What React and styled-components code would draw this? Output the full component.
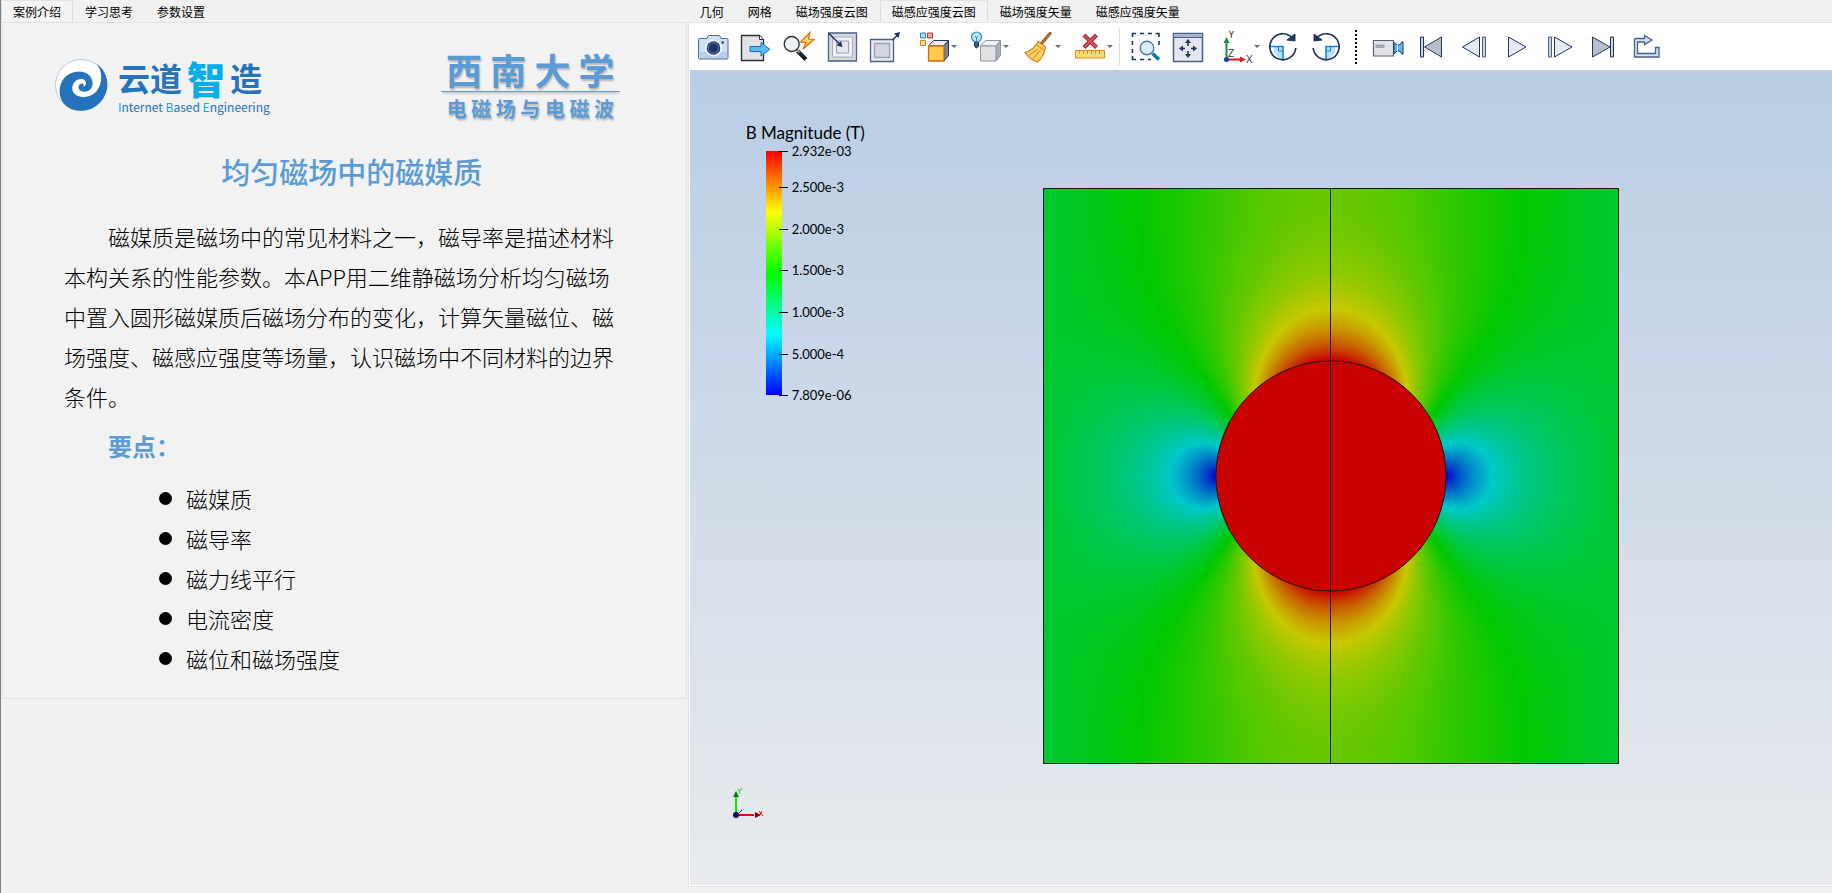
import React, { useEffect, useRef } from "react";
import styled, { createGlobalStyle } from "styled-components";

const GlobalStyle = createGlobalStyle`
  * { box-sizing: border-box; }
  body {
    margin: 0;
    background: #f1f1f1;
    color: #000;
    font-family: "Noto Sans CJK SC", sans-serif;
    font-size: 12px;
  }
  h1, h2, p, ul, ol { margin: 0; padding: 0; font-weight: inherit; }
  ul, ol { list-style: none; }
`;

const Workspace = styled.div`
  display: grid;
  grid-template-columns: minmax(0, 3fr) minmax(0, 5fr);
  min-height: 100vh;
  padding-bottom: 6px;
  border-left: 1px solid #7d7c8b;
`;

const Pane = styled.section`
  display: flex;
  flex-direction: column;
  min-width: 0;
`;

const TabList = styled.nav`
  display: flex;
  height: 22px;
`;

const Tab = styled.button`
  height: 23px;
  padding: 0 11px;
  border: 1px solid ${(p) => (p.$active ? "#dcdcdc" : "transparent")};
  border-top-color: ${(p) => (p.$active ? "#e4e4e4" : "transparent")};
  border-bottom-color: #dcdcdc;
  background: ${(p) => (p.$active ? "#f3f3f3" : "transparent")};
  font: inherit;
  line-height: 20px;
  color: #000;
  white-space: nowrap;
`;

const Sheet = styled.div`
  flex: 0 0 auto;
  margin: 0 1px;
  padding: 24px 66px 20px 61px;
  border: 1px solid #e2e2e2;
  background: #f2f2f2;
`;

const Brands = styled.header`
  display: flex;
  justify-content: space-between;
  height: 88px;
`;

const Company = styled.div`
  display: flex;
  align-items: center;
  gap: 10px;
  height: 76px;
  margin-left: -9px;
`;

const CompanyText = styled.div`
  display: flex;
  flex-direction: column;
  color: #2673bc;
`;

const CompanyName = styled.strong`
  display: flex;
  align-items: center;
  gap: 5px;
  height: 44px;
  font-size: 32px;
  font-weight: 700;
  white-space: nowrap;
`;

const BrushGlyph = styled.span`
  font-size: 38px;
  font-weight: 900;
  color: #00aef0;
`;

const Tagline = styled.span`
  font-size: 12px;
  line-height: 16px;
  white-space: nowrap;

  b { font-weight: 400; color: #00aef0; }
`;

const School = styled.div`
  color: #5b9bd5;
  font-weight: 700;
  text-align: center;
  white-space: nowrap;
  text-shadow: 1px 2px 2px rgba(0, 0, 0, 0.25);
`;

const SchoolName = styled.div`
  padding: 0 5px;
  border-bottom: 1px solid #5b9bd5;
  box-shadow: 0 4px 2px -2px rgba(0, 0, 0, 0.15);
  font-size: 36px;
  line-height: 44px;
`;

const Course = styled.div`
  font-size: 20px;
  line-height: 34px;
`;

const Title = styled.h1`
  padding: 16px 0 25px 20px;
  color: #5b9bd5;
  font-size: 29px;
  font-weight: 500;
  line-height: 40px;
  text-align: center;
`;

const Intro = styled.p`
  font-size: 22px;
  font-weight: 300;
  line-height: 40px;
  text-indent: 2em;
`;

const KeyHeading = styled.h2`
  padding: 10px 0 12px 44px;
  color: #5b9bd5;
  font-size: 24px;
  font-weight: 700;
  line-height: 40px;
`;

const KeyList = styled.ul`
  padding-left: 95px;
`;

const KeyItem = styled.li`
  display: flex;
  align-items: center;
  gap: 14px;
  font-size: 22px;
  font-weight: 300;
  line-height: 40px;

  &::before {
    content: "";
    width: 13px;
    height: 13px;
    border-radius: 50%;
    background: #000;
  }
`;

const Viewer = styled.div`
  display: flex;
  flex-direction: column;
  flex: 1;
  border: 1px solid #e2e2e2;
  border-right: 0;
  background: #fff;
`;

const Toolbar = styled.div`
  display: flex;
  align-items: center;
  height: 47px;
  padding-left: 3px;
`;

const Tool = styled.button`
  display: flex;
  align-items: center;
  justify-content: ${(p) => (p.$menu ? "flex-end" : "center")};
  gap: 1px;
  flex: none;
  width: ${(p) => (p.$menu ? 52 : 43)}px;
  height: 40px;
  padding: 0;
  border: 0;
  background: none;
`;

const Caret = styled.span`
  width: 6px;
  border: 3px solid transparent;
  border-top-color: #6e6e6e;
  border-bottom: 0;
  margin-right: 2px;
`;

const Divider = styled.span`
  width: 9px;
  height: 36px;
  flex: none;
  padding-left: 4px;

  &::before {
    content: "";
    display: block;
    width: 1px;
    height: 100%;
    background: #dadada;
  }
`;

const DottedDivider = styled.span`
  width: 19px;
  height: 34px;
  flex: none;
  padding-left: 7px;

  &::before {
    content: "";
    display: block;
    width: 2px;
    height: 100%;
    background: repeating-linear-gradient(#000 0 2px, transparent 2px 4px);
  }
`;

const Scene = styled.div`
  display: flex;
  flex: 1;
  margin: 0 0 1px 1px;
  background: linear-gradient(#b9cde5, #e8eaed);
`;

const SceneSide = styled.div`
  display: flex;
  flex-direction: column;
  justify-content: space-between;
  flex: 0 1 353px;
  padding: 52px 0 62px 38px;
`;

const PlotArea = styled.div`
  display: flex;
  align-items: center;
  flex: 1;
  min-width: 0;
  padding-bottom: 4px;
`;

const Field = styled.canvas`
  display: block;
  width: 100%;
  max-width: 576px;
  aspect-ratio: 1;
`;

const Legend = styled.div`
  padding-left: 18px;
  font-family: Lato, sans-serif;
`;

const LegendTitle = styled.div`
  font-size: 17px;
  line-height: 22px;
  white-space: nowrap;
`;

const Scale = styled.div`
  display: flex;
  height: 258px;
  padding-left: 20px;
`;

const ColorBar = styled.div`
  width: 16px;
  margin: 7px 0;
  background: linear-gradient(#f00, #ff0 25%, #0f0 50%, #0ff 75%, #00f);
`;

const Ticks = styled.ol`
  display: flex;
  flex-direction: column;
  margin-left: -3px;
`;

const Tick = styled.li`
  display: flex;
  gap: 4px;
  min-height: 0;
  font-size: 13px;
  line-height: 14px;
  white-space: nowrap;

  &::before {
    content: "";
    width: 9px;
    height: 1px;
    margin-top: 7px;
    background: #000;
  }
`;

const C = { navy: "#1d3461", edge: "#4a5f86", face: "#e4e7ee", blue: "#8fd0f5" };

const Svg = ({ children }) => (
  <svg width="32" height="32" viewBox="0 0 32 32" fill="none" aria-hidden="true">{children}</svg>
);

const Rotate = ({ mirrored }) => (
  <Svg>
    <g transform={mirrored ? "translate(32 0) scale(-1 1)" : undefined}>
      <path d="M16 16H7v5q3 6 9 8z" fill="#b5e2fa" />
      <path d="M3 15.500H16V29" stroke="#1684cc" strokeWidth="1.600" />
      <path d="M11.500 16v4H16" stroke="#1684cc" />
      <path d="M25 6.500A13 13 0 1 0 28.800 17" stroke={C.navy} strokeWidth="1.700" />
      <path d="M28 3v7l-8-1z" fill={C.navy} stroke={C.navy} />
    </g>
  </Svg>
);

const icons = {
  camera: (
    <Svg>
      <path d="M3 7.500h7l1.500-3h11l1.500 3h6q1 0 1 1v18q0 1.500-1 1.500H3q-1.500 0-1.500-1.500V9q0-1.500 1.500-1.500z" fill="#cfe0f5" stroke="#4c6791" />
      <path d="M3 21h27v6H3z" fill="#b6cdeb" />
      <circle cx="16.500" cy="17" r="8.500" fill="#f4f8fd" />
      <circle cx="16.500" cy="17" r="6.800" fill={C.navy} />
      <circle cx="16.500" cy="17" r="5.200" stroke="#5f7fb5" />
      <circle cx="25.700" cy="11.500" r="1.200" fill={C.navy} />
    </Svg>
  ),
  exporter: (
    <Svg>
      <path d="M1.500 4.500h18l4 4v21h-22z" fill="#dfe2e9" stroke="#2a2c33" strokeWidth="1.300" />
      <path d="M19.500 4.500v4h4" fill="#fff" stroke="#2a2c33" />
      <path d="M10 15.500h11v-4l9 6.800-9 6.700v-4.500H10z" fill="#55bdf2" stroke="#1b6fb5" />
    </Svg>
  ),
  flash: (
    <Svg>
      <path d="M14.500 20l8.500 8.500" stroke="#222" strokeWidth="4" />
      <path d="M13.500 18.500l3 3" stroke="#999" strokeWidth="2" />
      <circle cx="8.700" cy="13" r="7.500" fill="#edf0f4" stroke="#333" strokeWidth="1.400" />
      <path d="M27 1.500L17.500 11l5.500.5-3 6.500L31 8.500 25.500 8z" fill="#ffd65a" stroke="#dd6b0d" strokeWidth="1.200" />
    </Svg>
  ),
  zoomIn: (
    <Svg>
      <path d="M2.500 2h28v28h-28z" fill="#d5d9e2" stroke={C.edge} strokeWidth="1.300" />
      <path d="M6.500 6h20v20h-20z" fill="#eef0f4" stroke="#a5adbf" />
      <path d="M10.500 10h12v12h-12z" fill={C.face} stroke="#9aa3b5" />
      <path d="M2.500 2L14 13.500" stroke={C.navy} strokeWidth="1.400" />
      <path d="M16.500 16l-6-1.500 4.500-4.500z" fill={C.navy} />
    </Svg>
  ),
  zoomOut: (
    <Svg>
      <path d="M1.500 8.500h23v22h-23z" fill="#e9ecf1" stroke={C.edge} strokeWidth="1.300" />
      <path d="M5.500 12.500h15v14h-15z" fill="#d4d7df" stroke="#98a1b3" strokeWidth="1.300" />
      <path d="M23.500 9L29 3.500" stroke={C.navy} strokeWidth="1.400" />
      <path d="M31 1l-6 1.500 4.500 4.500z" fill={C.navy} />
    </Svg>
  ),
  cube: (
    <Svg>
      <path d="M2.500 2h5v5h-5z" fill="#a8ddf5" stroke="#2a87bd" />
      <path d="M9.500 2h5v5h-5z" fill="#eea9a9" stroke="#b92f36" />
      <path d="M2.500 9.500h5v5h-5z" fill="#ffe39b" stroke="#df811a" />
      <path d="M10.500 15l5-5.500h15l-4.500 5.500z" fill="#eceef2" stroke={C.navy} />
      <path d="M26 15l4.500-5.500v15L26 30z" fill="#7886a0" stroke={C.navy} />
      <path d="M10.500 15h15.500v15h-15.500z" fill="#fdca4b" stroke="#c96a13" strokeWidth="1.300" />
    </Svg>
  ),
  bulb: (
    <Svg>
      <path d="M10.500 15l5-5.500h15l-4.500 5.500z" fill="#f1f2f4" stroke="#8b93a0" />
      <path d="M26 15l4.500-5.500v15L26 30z" fill="#aab0ba" stroke="#8b93a0" />
      <path d="M10.500 15h15.500v15h-15.500z" fill="#dfe1e5" stroke="#8b93a0" />
      <path d="M4.500 11.500h4v4l-2 1.500-2-1.500z" fill="#4a5a78" stroke={C.navy} />
      <circle cx="6.500" cy="6" r="5" fill="#bfe5fa" stroke="#2f86c6" strokeWidth="1.200" />
      <path d="M5 5l1.500 2L8 5M6.500 7v4" stroke="#2f86c6" />
    </Svg>
  ),
  broom: (
    <Svg>
      <path d="M28 2.500l-8.500 10" stroke="#8b4a14" strokeWidth="3" strokeLinecap="round" />
      <path d="M28 2.500l-8.500 10" stroke="#c9772c" strokeWidth="1.200" />
      <path d="M16 10.500l7.500 5.500q-1 9-8 15Q8 29 3 21.500 12 19 16 10.500z" fill="#fbd263" stroke="#cf8119" strokeWidth="1.200" />
      <path d="M14 13.500l8.500 6M16 18L7 24.500M18 19.500l-7 8.500" stroke="#cf8119" />
    </Svg>
  ),
  ruler: (
    <Svg>
      <path d="M10 4l12.500 12.500M22.500 4L10 16.500" stroke="#9e2630" strokeWidth="4" />
      <path d="M10.500 4.500L22 16M22 4.500L10.500 16" stroke="#d9565f" strokeWidth="2" />
      <path d="M1.500 19.500h29v7.500h-29z" fill="#ffdb74" stroke="#df8721" />
      <path d="M5.500 20v3M9.500 20v3M13.500 20v3M17.500 20v3M21.500 20v3M25.500 20v3" stroke="#df8721" />
    </Svg>
  ),
  select: (
    <Svg>
      <path d="M3.500 6V2.500H7M11 2.500h4M19 2.500h4M26.500 2.500H30V6M30 10v4M3.500 10v4M3.500 18v4M3.500 25v3.500H7M11 28.500h4M19 28.500h3" stroke={C.navy} strokeWidth="1.600" />
      <path d="M23.500 22.500l6.500 6" stroke="#1c6fae" strokeWidth="3.600" />
      <circle cx="18" cy="17" r="6.800" fill="#d8effb" stroke="#4e7ba8" strokeWidth="1.400" />
    </Svg>
  ),
  pan: (
    <Svg>
      <path d="M1.500 2.500h29v28h-29z" fill={C.face} stroke={C.edge} strokeWidth="1.500" />
      <path d="M2 3h28v3H2z" fill="#a9b4ca" />
      <path d="M2 6.500h28" stroke={C.edge} />
      <path d="M16 10v5M16 20v5M8 17.500h5M19 17.500h5" stroke={C.navy} strokeWidth="1.600" />
      <path d="M16 8l3 4h-6zM16 27l3-4h-6zM7 17.500l4-3v6zM25 17.500l-4-3v6z" fill={C.navy} />
    </Svg>
  ),
  axes: (
    <Svg>
      <path d="M5.500 28V8" stroke="#179146" strokeWidth="2" />
      <path d="M5.500 6l3 6h-6z" fill="#179146" />
      <path d="M6 28.500h15" stroke="#e8131c" strokeWidth="2" />
      <path d="M25 28.500l-6 3v-6z" fill="#e8131c" />
      <circle cx="5.500" cy="28.500" r="2.500" fill="#1b3aa0" />
      <g fill="#333" fontFamily="Liberation Sans, sans-serif" fontSize="10">
        <text x="7" y="7">Y</text>
        <text x="7" y="26">Z</text>
        <text x="25" y="32">X</text>
      </g>
    </Svg>
  ),
  cw: <Rotate />,
  ccw: <Rotate mirrored />,
  video: (
    <Svg>
      <path d="M1.500 9.500h20v15.500h-20z" fill="#e3e4e9" stroke="#5c6170" strokeWidth="1.200" />
      <path d="M3.500 13.500h9v3.500h-9z" fill="#a5a7ad" />
      <path d="M22 11.500l3 2.500h2l4-3.500v13L27 20h-2l-3 3z" fill="#54bdee" stroke={C.navy} />
      <path d="M25.500 13.500v7" stroke="#fff" />
    </Svg>
  ),
  first: (
    <Svg>
      <path d="M5.500 6h3v20h-3z" fill="#cdd3df" stroke={C.navy} />
      <path d="M9.500 16L26.500 6v20z" fill="#b8bfcb" stroke={C.navy} />
    </Svg>
  ),
  previous: (
    <Svg>
      <path d="M4.500 16L21.500 6v20z" fill="#e6eaf2" stroke={C.navy} />
      <path d="M24.500 6h3v20h-3z" fill="#cdd3df" stroke={C.edge} />
    </Svg>
  ),
  play: (
    <Svg>
      <path d="M7.500 6L25 16 7.500 26z" fill="#e6eaf2" stroke={C.navy} />
    </Svg>
  ),
  next: (
    <Svg>
      <path d="M4.500 6h3v20h-3z" fill="#cdd3df" stroke={C.edge} />
      <path d="M10.500 6L28 16 10.500 26z" fill="#e6eaf2" stroke={C.navy} />
    </Svg>
  ),
  last: (
    <Svg>
      <path d="M5.500 6L23 16 5.500 26z" fill="#b8bfcb" stroke={C.navy} />
      <path d="M23.500 6h3v20h-3z" fill="#cdd3df" stroke={C.navy} />
    </Svg>
  ),
  loop: (
    <Svg>
      <path d="M14.500 4.500L22 9l-7.500 4.500V11H7.500v11.500h18v-6h3.500V26H4.500V9q0-1.500 1.500-1.500h8.500z" fill="#cfe3f7" stroke={C.edge} strokeWidth="1.300" />
    </Svg>
  ),
};

const Swirl = () => (
  <svg width="53" height="53" viewBox="0 0 53 53" aria-hidden="true">
    <circle cx="26" cy="26" r="25.500" fill="#fff" stroke="#b9cee6" />
    <path
      fill="#2673bc"
      d="M42 5C52 12 55 26 50 36 45 48 32 54 19 51 8 48 3 38 5 28 7 18 15 12.500 25 12.500 34 13 38.500 20 37.500 26 36.500 32 30 34 26 32 22 30 23 25 27 24.500 29 24.500 29 26.500 28 27.500 31 27.500 32 24 30 21.500 26 18 19 21 17.500 27 16 34 22 39 30 38 45 37 51 18 42 5z"
    />
  </svg>
);

const Triad = () => (
  <svg width="40" height="36" viewBox="0 0 40 36" role="img" aria-label="XY">
    <path d="M8 28V8" stroke="#00f000" strokeWidth="2" />
    <path d="M8 4l3 6H5z" fill="#0a7a12" />
    <path d="M8 28h18" stroke="#f00000" strokeWidth="2" />
    <path d="M33 28l-6 3v-6z" fill="#7a0606" />
    <path d="M11 26l3-3" stroke="#1414ff" />
    <circle cx="8" cy="28" r="3" fill="#06065c" />
    <path d="M10 2l1.500 2L14 1M11.500 4L11 7" stroke="#00f000" fill="none" />
    <path d="M31 24l4 5M34 24l-3 5" stroke="#f00000" />
  </svg>
);

const SIZE = 576;
const LOW = 7.809e-6;
const HIGH = 2.932e-3;

// Rainbow map (blue, cyan, green, yellow, red), dimmed by the scene lighting.
function fieldColor(b) {
  const t = Math.min(1, Math.max(0, (b - LOW) / (HIGH - LOW))) * 4;
  const ramp = (v) => Math.min(1, Math.max(0, v)) * 200;
  return [ramp(t - 2), t < 2 ? ramp(t) : ramp(4 - t), ramp(2 - t)];
}

// |B| around a permeable cylinder; the side walls hold the tangential field,
// so columns of image dipoles alternate in sign.
function fluxDensity(x, y) {
  const applied = 1.286e-3;
  const strength = 0.98 * 0.16 * 1.155 * (Math.PI / 2) ** 2;
  let re = 0;
  let im = 0;
  for (let m = -2; m <= 2; m += 1) {
    const u = (Math.PI / 2) * (x - 2 * m);
    const v = (Math.PI / 2) * y;
    const sr = Math.sinh(u) * Math.cos(v);
    const si = Math.cosh(u) * Math.sin(v);
    const qr = sr * sr - si * si;
    const qi = 2 * sr * si;
    const d = qr * qr + qi * qi || 1e-9;
    const sign = m % 2 ? -1 : 1;
    re += (sign * qr) / d;
    im -= (sign * qi) / d;
  }
  return applied * Math.hypot(1 - strength * re, strength * im);
}

function paintField(canvas) {
  const ctx = canvas.getContext("2d");
  const image = ctx.createImageData(SIZE, SIZE);
  for (let j = 0; j < SIZE; j += 1) {
    for (let i = 0; i < SIZE; i += 1) {
      const x = (i + 0.5) / (SIZE / 2) - 1;
      const y = (j + 0.5) / (SIZE / 2) - 1;
      const b = x * x + y * y < 0.16 ? HIGH : fluxDensity(x, y);
      const [r, g, bl] = fieldColor(b);
      image.data.set([r, g, bl, 255], (j * SIZE + i) * 4);
    }
  }
  ctx.putImageData(image, 0, 0);
  ctx.strokeStyle = "#1a1a1a";
  ctx.lineWidth = 1;
  ctx.strokeRect(0.5, 0.5, SIZE - 1, SIZE - 1);
  ctx.beginPath();
  ctx.arc(SIZE / 2, SIZE / 2, 115, 0, Math.PI * 2);
  ctx.moveTo(SIZE / 2 - 0.5, 0);
  ctx.lineTo(SIZE / 2 - 0.5, SIZE);
  ctx.stroke();
}

function FieldPlot() {
  const ref = useRef(null);
  useEffect(() => paintField(ref.current), []);
  return <Field ref={ref} width={SIZE} height={SIZE} role="img" aria-label="B Magnitude (T)" />;
}

const introTabs = ["案例介绍", "学习思考", "参数设置"];
const viewTabs = ["几何", "网格", "磁场强度云图", "磁感应强度云图", "磁场强度矢量", "磁感应强度矢量"];
const keyPoints = ["磁媒质", "磁导率", "磁力线平行", "电流密度", "磁位和磁场强度"];
const levels = [
  ["2.932e-03", 2.932],
  ["2.500e-3", 2.5],
  ["2.000e-3", 2],
  ["1.500e-3", 1.5],
  ["1.000e-3", 1],
  ["5.000e-4", 0.5],
  ["7.809e-06", 0.0078],
];
const tools = [
  ["camera"], ["exporter"], ["flash"], ["zoomIn"], ["zoomOut"],
  ["cube", true], ["bulb", true], ["broom", true], ["ruler", true],
  ["divider"],
  ["select"], ["pan"], ["axes", true], ["cw"], ["ccw"],
  ["dots"],
  ["video"], ["first"], ["previous"], ["play"], ["next"], ["last"], ["loop"],
];

const Tabs = ({ items, active }) => (
  <TabList>
    {items.map((name) => (
      <Tab key={name} type="button" $active={name === active}>{name}</Tab>
    ))}
  </TabList>
);

export default function App() {
  return (
    <>
      <GlobalStyle />
      <Workspace>
        <Pane>
          <Tabs items={introTabs} active="案例介绍" />
          <Sheet>
            <Brands>
              <Company>
                <Swirl />
                <CompanyText>
                  <CompanyName>
                    <span>云道</span>
                    <BrushGlyph>智</BrushGlyph>
                    <span>造</span>
                  </CompanyName>
                  <Tagline><b>I</b>nternet <b>B</b>ased <b>E</b>ngineering</Tagline>
                </CompanyText>
              </Company>
              <School>
                <SchoolName>西 南 大 学</SchoolName>
                <Course>电 磁 场 与 电 磁 波</Course>
              </School>
            </Brands>
            <Title>均匀磁场中的磁媒质</Title>
            <Intro>
              磁媒质是磁场中的常见材料之一，磁导率是描述材料本构关系的性能参数。本APP用二维静磁场分析均匀磁场中置入圆形磁媒质后磁场分布的变化，计算矢量磁位、磁场强度、磁感应强度等场量，认识磁场中不同材料的边界条件。
            </Intro>
            <KeyHeading>要点：</KeyHeading>
            <KeyList>
              {keyPoints.map((point) => <KeyItem key={point}>{point}</KeyItem>)}
            </KeyList>
          </Sheet>
        </Pane>
        <Pane>
          <Tabs items={viewTabs} active="磁感应强度云图" />
          <Viewer>
            <Toolbar>
              {tools.map(([name, menu]) => {
                if (name === "divider") return <Divider key={name} />;
                if (name === "dots") return <DottedDivider key={name} />;
                return (
                  <Tool key={name} type="button" aria-label={name} $menu={menu}>
                    {icons[name]}
                    {menu && <Caret />}
                  </Tool>
                );
              })}
            </Toolbar>
            <Scene>
              <SceneSide>
                <Legend>
                  <LegendTitle>B Magnitude (T)</LegendTitle>
                  <Scale>
                    <ColorBar />
                    <Ticks>
                      {levels.map(([label, value], i) => (
                        <Tick
                          key={label}
                          style={{ flex: i < levels.length - 1 ? `${value - levels[i + 1][1]} 1 0` : "0 0 14px" }}
                        >
                          {label}
                        </Tick>
                      ))}
                    </Ticks>
                  </Scale>
                </Legend>
                <Triad />
              </SceneSide>
              <PlotArea>
                <FieldPlot />
              </PlotArea>
            </Scene>
          </Viewer>
        </Pane>
      </Workspace>
    </>
  );
}
